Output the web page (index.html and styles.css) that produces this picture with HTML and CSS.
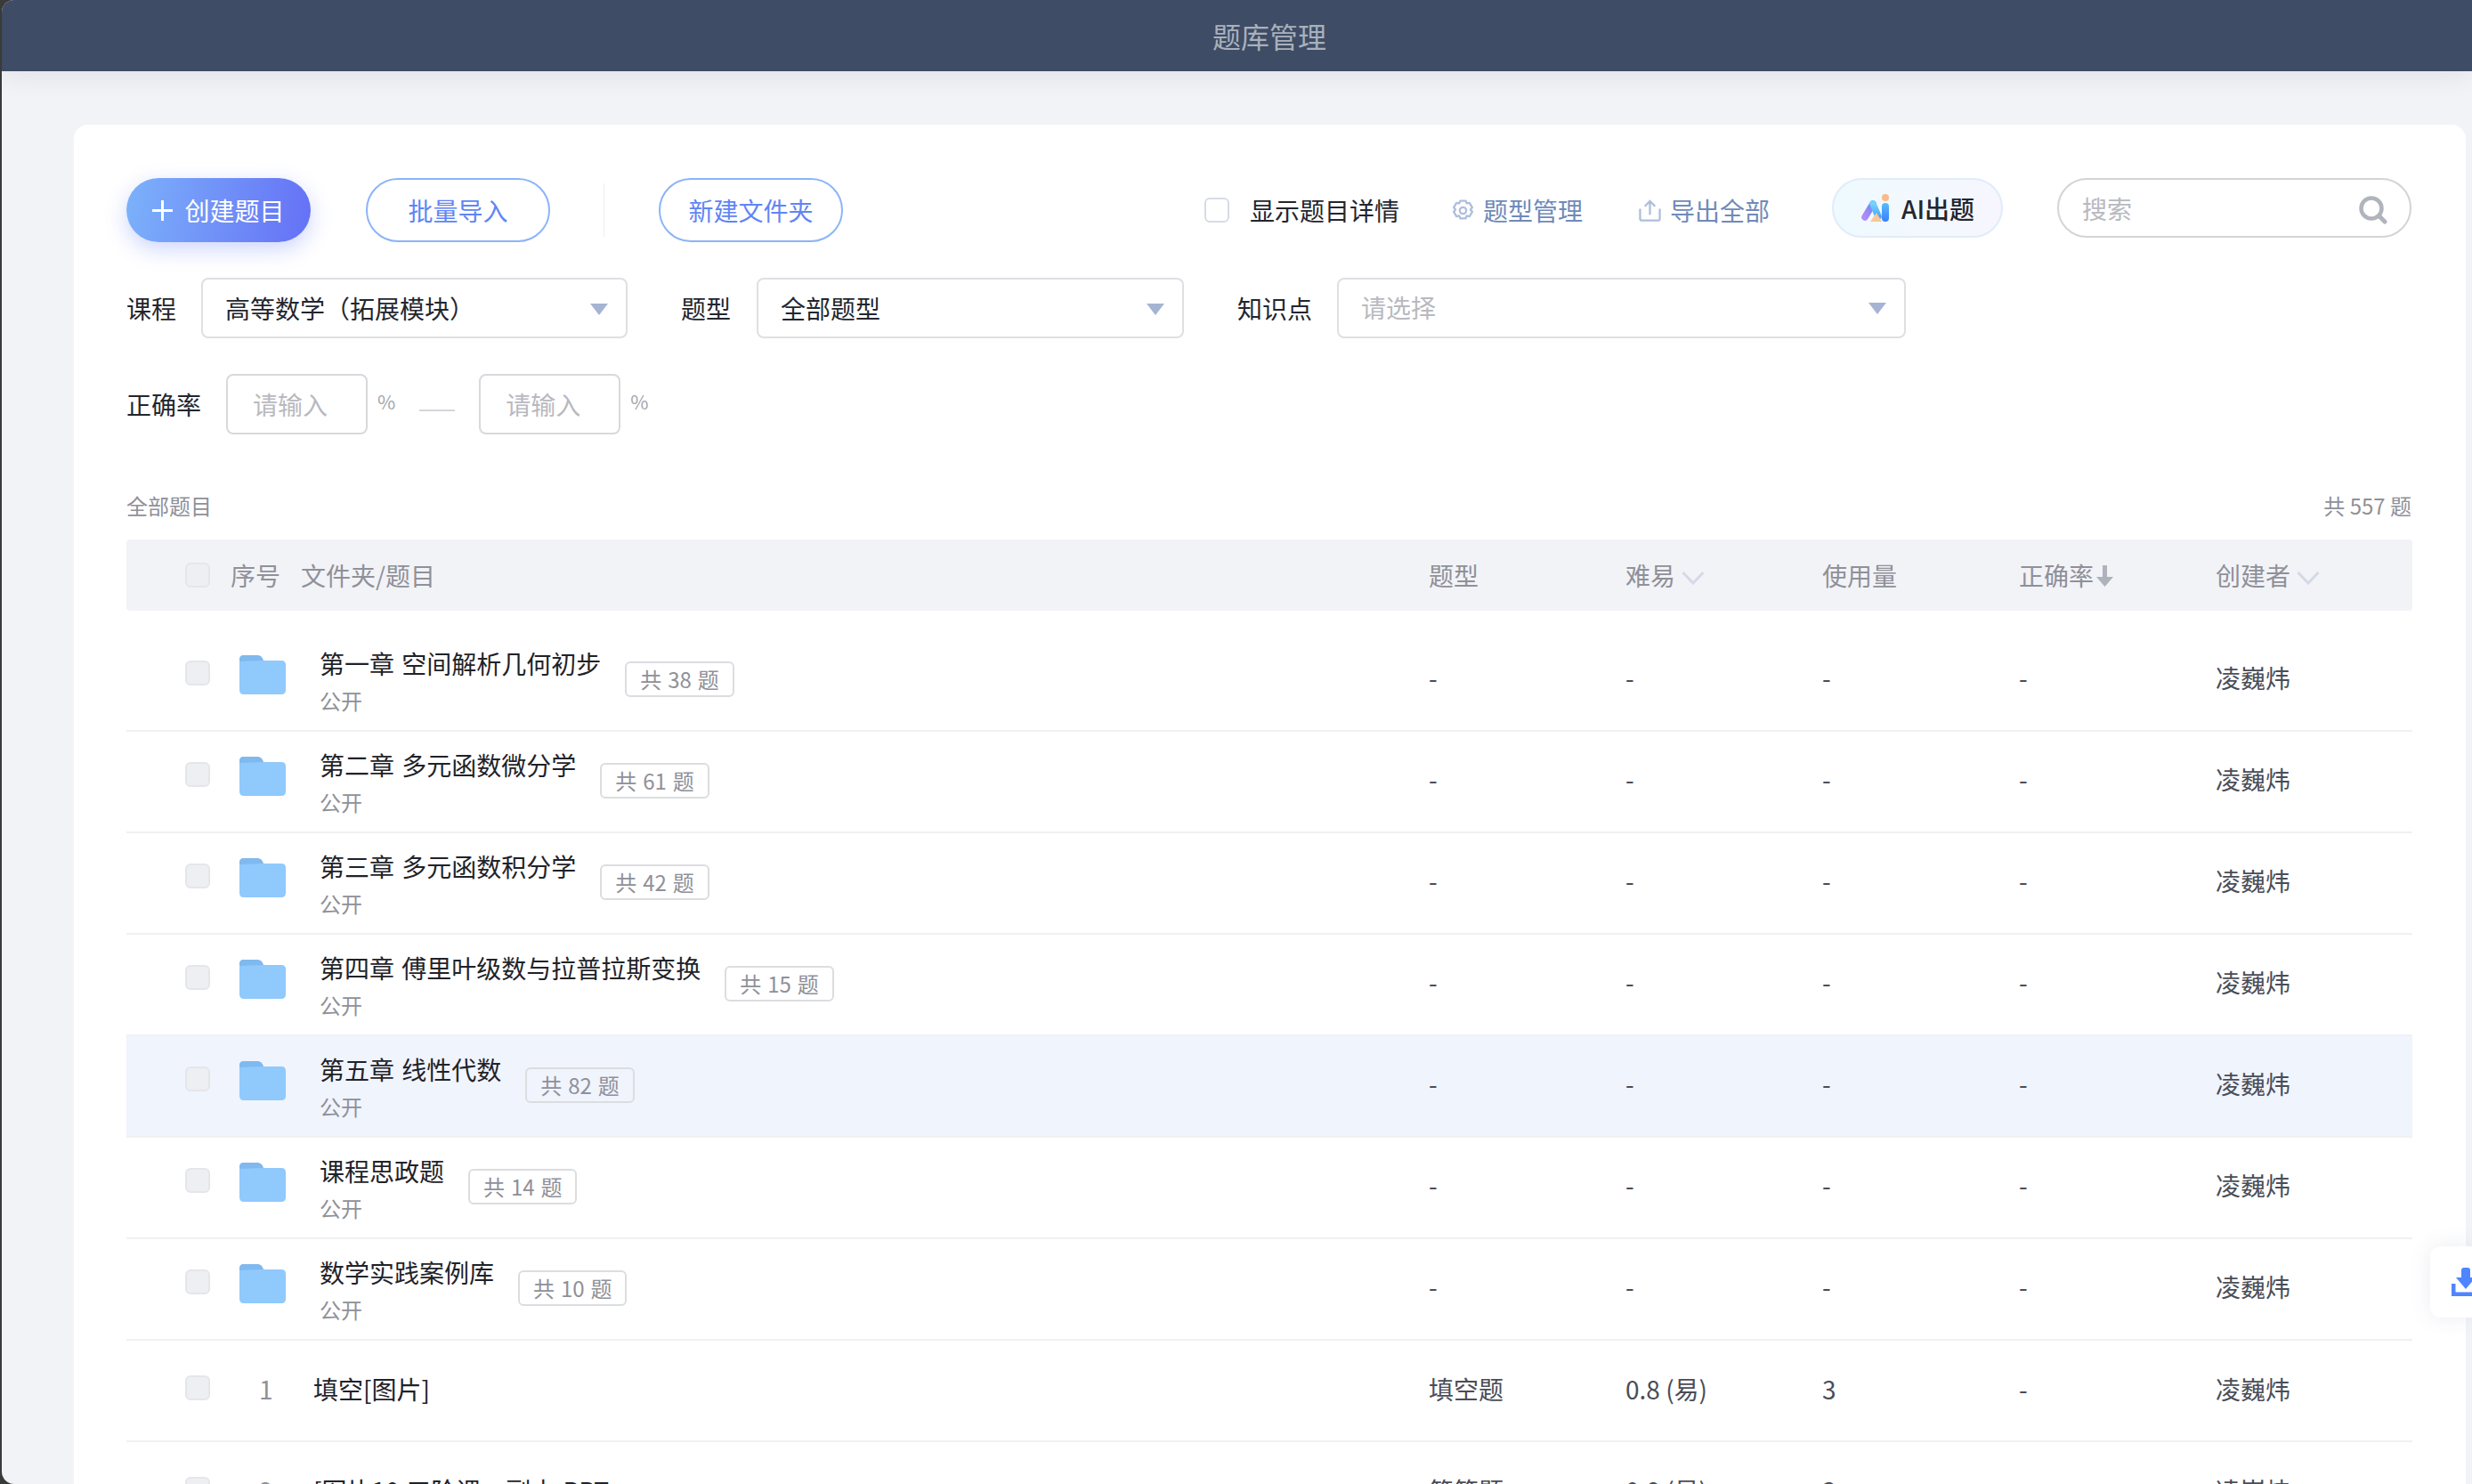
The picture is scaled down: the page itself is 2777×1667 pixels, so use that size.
FILE: index.html
```html
<!DOCTYPE html>
<html lang="zh-CN">
<head>
    <meta charset="UTF-8">
    <meta name="viewport" content="width=device-width, initial-scale=1.0">
    <title>题库管理</title>
    <link rel="stylesheet" href="styles.css">
</head>
<body>
    <div class="window">
        <div class="topbar">题库管理</div>
        <div class="card">
            <div class="toolbar">
                <button class="btn btn-primary">
                    <svg class="plus-icon" viewBox="0 0 23 23"><path d="M11.5 0v23M0 11.5h23" stroke="#fff" stroke-width="3" fill="none"/></svg>
                    创建题目
                </button>
                <button class="btn btn-outline btn-import">批量导入</button>
                <span class="divider"></span>
                <button class="btn btn-outline">新建文件夹</button>
                <div class="tools">
                    <label class="detail-check"><span class="check check-white"></span>显示题目详情</label>
                    <a class="tool-link tool-types">
                        <svg class="tool-icon" viewBox="0 0 24 24" fill="none" stroke="#aebfdd" stroke-width="2.200" stroke-linejoin="round">
                            <path d="M9 1.500h6l1 2.800 3-.6 3 5-2 2.300 2 2.300-3 5-3-.6-1 2.800H9l-1-2.800-3 .6-3-5 2-2.300-2-2.300 3-5 3 .6z"/>
                            <circle cx="12" cy="12" r="3.500"/>
                        </svg>
                        题型管理
                    </a>
                    <a class="tool-link tool-export">
                        <svg class="tool-icon" viewBox="0 0 26 26" fill="none" stroke="#aebfdd" stroke-width="2.400">
                            <path d="M1.500 11v11.500q0 2 2 2h19q2 0 2-2V11"/>
                            <path d="M13 18V2M7 8l6-6 6 6"/>
                        </svg>
                        导出全部
                    </a>
                    <button class="ai-btn">
                        <svg class="ai-logo" viewBox="0 0 33 32">
                            <defs>
                                <linearGradient id="ai-left" x1="0" y1="1" x2="1" y2="0"><stop offset="0" stop-color="#b08cf6"/><stop offset="1" stop-color="#6f86f8"/></linearGradient>
                                <linearGradient id="ai-right" x1="0" y1="0" x2="0" y2="1"><stop offset="0" stop-color="#74d3fb"/><stop offset="1" stop-color="#4fa6fb"/></linearGradient>
                                <linearGradient id="ai-i" x1="0" y1="0" x2="0" y2="1"><stop offset="0" stop-color="#58bdfb"/><stop offset="1" stop-color="#3a7ffb"/></linearGradient>
                            </defs>
                            <path d="M4 26L13 11" stroke="url(#ai-left)" stroke-width="7.500" stroke-linecap="round"/>
                            <path d="M13 11l6 14" stroke="url(#ai-right)" stroke-width="7.500" stroke-linecap="round"/>
                            <path d="M10 31l7-10 6 10z" fill="#fbc793"/>
                            <circle cx="27" cy="4" r="4" fill="#fbb98a"/>
                            <rect x="23" y="10" width="8" height="21" rx="4" fill="url(#ai-i)"/>
                        </svg>
                        AI出题
                    </button>
                    <div class="search">
                        <span class="search-text">搜索</span>
                        <svg class="search-icon" viewBox="0 0 34 32" fill="none" stroke="#b0b4bc">
                            <circle cx="15" cy="14" r="11.500" stroke-width="4.500"/>
                            <path d="M24 23l6 6" stroke-width="5" stroke-linecap="round"/>
                        </svg>
                    </div>
                </div>
            </div>

            <div class="filters">
                <span class="filter-label">课程</span>
                <div class="select select-course">高等数学（拓展模块）<i class="caret"></i></div>
                <span class="filter-label">题型</span>
                <div class="select select-type">全部题型<i class="caret"></i></div>
                <span class="filter-label">知识点</span>
                <div class="select select-point placeholder">请选择<i class="caret"></i></div>
            </div>

            <div class="filters">
                <span class="filter-label">正确率</span>
                <div class="rate-input placeholder">请输入</div>
                <span class="percent">%</span>
                <span class="dash"></span>
                <div class="rate-input placeholder">请输入</div>
                <span class="percent">%</span>
            </div>

            <div class="summary">
                <span>全部题目</span>
                <span>共 557 题</span>
            </div>

            <div class="row head">
                <div class="main">
                    <span class="check"></span>
                    <span class="head-no">序号</span>
                    <span class="head-name">文件夹/题目</span>
                </div>
                <div>题型</div>
                <div class="head-sort">难易<svg class="chevron" viewBox="0 0 26 16"><path d="M1.500 2L13 14 24.500 2" fill="none" stroke="#d3d9e6" stroke-width="3"/></svg></div>
                <div>使用量</div>
                <div class="head-sort">正确率<svg class="sort-down" viewBox="0 0 19 24"><path d="M7 0h5v13h7L9.500 24 0 13h7z" fill="#aeb2bc"/></svg></div>
                <div class="head-sort">创建者<svg class="chevron" viewBox="0 0 26 16"><path d="M1.500 2L13 14 24.500 2" fill="none" stroke="#d3d9e6" stroke-width="3"/></svg></div>
            </div>

            <div class="rows">
                <div class="row">
                    <div class="main">
                        <span class="check"></span>
                        <svg class="folder" viewBox="0 0 52 44"><path d="M0 5q0-5 5-5h15q5 0 7 6h20q5 0 5 5v28q0 5-5 5H5q-5 0-5-5z" fill="#90c9fc"/><path d="M0 7V5q0-5 5-5h15q5 0 7 6z" fill="#7fb9ee"/></svg>
                        <div class="name"><div class="title">第一章 空间解析几何初步</div><div class="sub">公开</div></div>
                        <span class="badge">共 38 题</span>
                    </div>
                    <div>-</div><div>-</div><div>-</div><div>-</div><div>凌巍炜</div>
                </div>
                <div class="row">
                    <div class="main">
                        <span class="check"></span>
                        <svg class="folder" viewBox="0 0 52 44"><path d="M0 5q0-5 5-5h15q5 0 7 6h20q5 0 5 5v28q0 5-5 5H5q-5 0-5-5z" fill="#90c9fc"/><path d="M0 7V5q0-5 5-5h15q5 0 7 6z" fill="#7fb9ee"/></svg>
                        <div class="name"><div class="title">第二章 多元函数微分学</div><div class="sub">公开</div></div>
                        <span class="badge">共 61 题</span>
                    </div>
                    <div>-</div><div>-</div><div>-</div><div>-</div><div>凌巍炜</div>
                </div>
                <div class="row">
                    <div class="main">
                        <span class="check"></span>
                        <svg class="folder" viewBox="0 0 52 44"><path d="M0 5q0-5 5-5h15q5 0 7 6h20q5 0 5 5v28q0 5-5 5H5q-5 0-5-5z" fill="#90c9fc"/><path d="M0 7V5q0-5 5-5h15q5 0 7 6z" fill="#7fb9ee"/></svg>
                        <div class="name"><div class="title">第三章 多元函数积分学</div><div class="sub">公开</div></div>
                        <span class="badge">共 42 题</span>
                    </div>
                    <div>-</div><div>-</div><div>-</div><div>-</div><div>凌巍炜</div>
                </div>
                <div class="row">
                    <div class="main">
                        <span class="check"></span>
                        <svg class="folder" viewBox="0 0 52 44"><path d="M0 5q0-5 5-5h15q5 0 7 6h20q5 0 5 5v28q0 5-5 5H5q-5 0-5-5z" fill="#90c9fc"/><path d="M0 7V5q0-5 5-5h15q5 0 7 6z" fill="#7fb9ee"/></svg>
                        <div class="name"><div class="title">第四章 傅里叶级数与拉普拉斯变换</div><div class="sub">公开</div></div>
                        <span class="badge">共 15 题</span>
                    </div>
                    <div>-</div><div>-</div><div>-</div><div>-</div><div>凌巍炜</div>
                </div>
                <div class="row active">
                    <div class="main">
                        <span class="check"></span>
                        <svg class="folder" viewBox="0 0 52 44"><path d="M0 5q0-5 5-5h15q5 0 7 6h20q5 0 5 5v28q0 5-5 5H5q-5 0-5-5z" fill="#90c9fc"/><path d="M0 7V5q0-5 5-5h15q5 0 7 6z" fill="#7fb9ee"/></svg>
                        <div class="name"><div class="title">第五章 线性代数</div><div class="sub">公开</div></div>
                        <span class="badge">共 82 题</span>
                    </div>
                    <div>-</div><div>-</div><div>-</div><div>-</div><div>凌巍炜</div>
                </div>
                <div class="row">
                    <div class="main">
                        <span class="check"></span>
                        <svg class="folder" viewBox="0 0 52 44"><path d="M0 5q0-5 5-5h15q5 0 7 6h20q5 0 5 5v28q0 5-5 5H5q-5 0-5-5z" fill="#90c9fc"/><path d="M0 7V5q0-5 5-5h15q5 0 7 6z" fill="#7fb9ee"/></svg>
                        <div class="name"><div class="title">课程思政题</div><div class="sub">公开</div></div>
                        <span class="badge">共 14 题</span>
                    </div>
                    <div>-</div><div>-</div><div>-</div><div>-</div><div>凌巍炜</div>
                </div>
                <div class="row">
                    <div class="main">
                        <span class="check"></span>
                        <svg class="folder" viewBox="0 0 52 44"><path d="M0 5q0-5 5-5h15q5 0 7 6h20q5 0 5 5v28q0 5-5 5H5q-5 0-5-5z" fill="#90c9fc"/><path d="M0 7V5q0-5 5-5h15q5 0 7 6z" fill="#7fb9ee"/></svg>
                        <div class="name"><div class="title">数学实践案例库</div><div class="sub">公开</div></div>
                        <span class="badge">共 10 题</span>
                    </div>
                    <div>-</div><div>-</div><div>-</div><div>-</div><div>凌巍炜</div>
                </div>
                <div class="row item">
                    <div class="main">
                        <span class="check"></span>
                        <span class="no">1</span>
                        <span class="title">填空[图片]</span>
                    </div>
                    <div>填空题</div><div>0.8 (易)</div><div>3</div><div>-</div><div>凌巍炜</div>
                </div>
                <div class="row item">
                    <div class="main">
                        <span class="check"></span>
                        <span class="no">2</span>
                        <span class="title">[图片10.三阶课—副本 PPT</span>
                    </div>
                    <div>简答题</div><div>0.8 (易)</div><div>3</div><div>-</div><div>凌巍炜</div>
                </div>
            </div>
        </div>
        <div class="float-btn">
            <svg class="float-icon" viewBox="0 0 32 32" fill="#4f85ff">
                <path d="M11 3q0-3 3-3h4q3 0 3 3v8h6L16 24 5 11h6z"/>
                <path d="M0 18h4.500v9.500h23V18H32v14H0z"/>
            </svg>
        </div>
    </div>
</body>
</html>
```

FILE: styles.css
```css
* {
    box-sizing: border-box;
}
html, body {
    height: 100%;
}
body {
    margin: 0;
    overflow: hidden;
    background-color: #3a3a3a;
    font-family: "Noto Sans CJK SC", "Noto Sans", sans-serif;
    font-size: 28px;
    color: #23262e;
}
.window {
    position: relative;
    margin-left: 2px;
    height: 1667px;
    background-color: #f2f3f7;
    border-radius: 14px 0 0 14px;
    overflow: hidden;
}
.topbar {
    display: flex;
    justify-content: center;
    align-items: center;
    height: 80px;
    padding-left: 73px;
    background-color: #3e4c65;
    color: #a9b0bc;
    font-size: 32px;
    box-shadow: 0 6px 30px rgba(0, 0, 0, 0.07);
}
.card {
    margin: 60px 7px 0 81px;
    padding: 60px 61px 60px 59px;
    height: 1600px;
    background-color: #fff;
    border-radius: 16px;
}

/* toolbar */
.toolbar {
    display: flex;
    align-items: center;
    height: 72px;
}
.btn {
    display: flex;
    justify-content: center;
    align-items: center;
    width: 207px;
    height: 72px;
    padding: 0;
    border-radius: 36px;
    font-family: inherit;
    font-size: 28px;
    cursor: pointer;
}
.btn-primary {
    gap: 13px;
    border: none;
    background: linear-gradient(100deg, #7cb2fa, #6570f6);
    color: #fff;
    box-shadow: 0 8px 24px rgba(100, 125, 250, 0.32);
}
.plus-icon {
    width: 23px;
    height: 23px;
}
.btn-outline {
    border: 2px solid #8cb4f8;
    background-color: #fff;
    color: #5f85f5;
}
.btn-import {
    margin-left: 62px;
}
.divider {
    width: 1px;
    height: 60px;
    margin: 0 61px 0 60px;
    background-color: #eeeff2;
}
.tools {
    display: flex;
    align-items: center;
    margin-left: auto;
}
.detail-check {
    display: flex;
    align-items: center;
    gap: 23px;
}
.tool-link {
    display: flex;
    align-items: center;
    gap: 10px;
    color: #6f8ab8;
}
.tool-types {
    margin-left: 59px;
}
.tool-export {
    margin-left: 63px;
}
.tool-icon {
    width: 25px;
    height: 25px;
}
.ai-btn {
    display: flex;
    align-items: center;
    gap: 12px;
    width: 192px;
    height: 67px;
    margin: 0 0 5px 70px;
    padding: 0 0 0 31px;
    border: 2px solid #e0ecfb;
    border-radius: 34px;
    background: linear-gradient(90deg, #eefaff, #f7f6fe);
    font-family: inherit;
    font-size: 28px;
    font-weight: 500;
    color: #23262e;
}
.ai-logo {
    width: 33px;
    height: 32px;
}
.search {
    display: flex;
    justify-content: space-between;
    align-items: center;
    width: 398px;
    height: 67px;
    margin: 0 0 5px 61px;
    padding: 0 24px 0 26px;
    border: 2px solid #d4d4d6;
    border-radius: 34px;
}
.search-text {
    color: #b8b9bf;
}
.search-icon {
    width: 34px;
    height: 32px;
    margin-top: 4px;
}

/* filters */
.check {
    display: block;
    flex-shrink: 0;
    width: 28px;
    height: 28px;
    border: 2px solid #e5e6ea;
    border-radius: 6px;
    background-color: #eeeff2;
}
.check-white {
    background-color: #fff;
    border-color: #d6dbe6;
}
.filters {
    display: flex;
    align-items: center;
    margin-top: 40px;
    height: 68px;
}
.filter-label {
    margin-right: 28px;
}
.select {
    display: flex;
    justify-content: space-between;
    align-items: center;
    height: 68px;
    margin-right: 60px;
    padding: 0 20px 0 25px;
    border: 2px solid #dfdfe4;
    border-radius: 8px;
}
.select-course {
    width: 479px;
}
.select-type {
    width: 480px;
    margin-left: 1px;
}
.select-point {
    width: 639px;
    padding-bottom: 2px;
}
.caret {
    width: 0;
    height: 0;
    margin-top: 3px;
    border-left: 10px solid transparent;
    border-right: 10px solid transparent;
    border-top: 13px solid #a6b4d3;
}
.placeholder {
    color: #b8b9bf;
}
.rate-input {
    display: flex;
    align-items: center;
    width: 159px;
    height: 68px;
    padding-left: 28px;
    border: 2px solid #d8d9dd;
    border-radius: 8px;
}
.percent {
    margin: 0 0 8px 11px;
    font-size: 22px;
    color: #a6a7ad;
}
.dash {
    width: 40px;
    height: 2px;
    margin: 14px 27px 0 27px;
    background-color: #d5d6da;
}

/* table */
.summary {
    display: flex;
    justify-content: space-between;
    margin-top: 63px;
    font-size: 24px;
    line-height: 34px;
    color: #8f9099;
}
.row {
    display: grid;
    grid-template-columns: 1fr repeat(5, 221px);
    align-items: center;
    height: 114px;
    margin: 0 -1px 0 0;
    padding-left: 66px;
    border-bottom: 2px solid #f0f1f3;
    color: #4a4d57;
}
.row > div:not(.main) {
    margin-bottom: 7px;
}
.row.head {
    height: 80px;
    margin-top: 21px;
    border-bottom: none;
    border-radius: 4px;
    background-color: #f2f3f7;
    color: #8f9099;
}
.rows {
    margin-top: 22px;
}
.row.active {
    background-color: #f0f4fd;
}
.main {
    display: flex;
    align-items: center;
    color: #1f2329;
}
.row.head > div {
    margin-bottom: 0;
}
.head .main {
    color: #8f9099;
}
.head .main .check {
    margin-bottom: 0;
}
.head-no {
    margin-left: 23px;
}
.head-name {
    margin-left: 23px;
}
.head-sort {
    display: flex;
    align-items: center;
}
.chevron {
    width: 26px;
    height: 16px;
    margin: 6px 0 0 7px;
}
.sort-down {
    width: 19px;
    height: 24px;
    margin: 2px 0 0 3px;
}
.main .check {
    margin-bottom: 16px;
}
.folder {
    flex-shrink: 0;
    width: 52px;
    height: 44px;
    margin: 0 38px 12px 33px;
}
.title {
    line-height: 40px;
    word-spacing: 2px;
}
.sub {
    margin-top: 5px;
    font-size: 24px;
    line-height: 34px;
    color: #8f9099;
}
.badge {
    margin: 0 0 2px 27px;
    padding: 0 15px;
    height: 40px;
    border: 2px solid #dcdde1;
    border-radius: 6px;
    font-size: 24px;
    line-height: 36px;
    word-spacing: 1.5px;
    color: #8f9099;
}
.item .main .check {
    margin-bottom: 7px;
}
.item .title, .no {
    margin-bottom: 4px;
}
.row.item > div:not(.main) {
    margin-bottom: 4px;
}
.no {
    width: 116px;
    padding-left: 55px;
    color: #8f9099;
}

/* floating download button */
.float-btn {
    position: absolute;
    top: 1400px;
    right: 0;
    width: 47px;
    height: 80px;
    padding: 24px 0 0 24px;
    overflow: hidden;
    background-color: #fff;
    border-radius: 12px 0 0 12px;
    box-shadow: 0 0 24px rgba(60, 70, 120, 0.1);
}
.float-icon {
    display: block;
    width: 32px;
    height: 32px;
}
```
